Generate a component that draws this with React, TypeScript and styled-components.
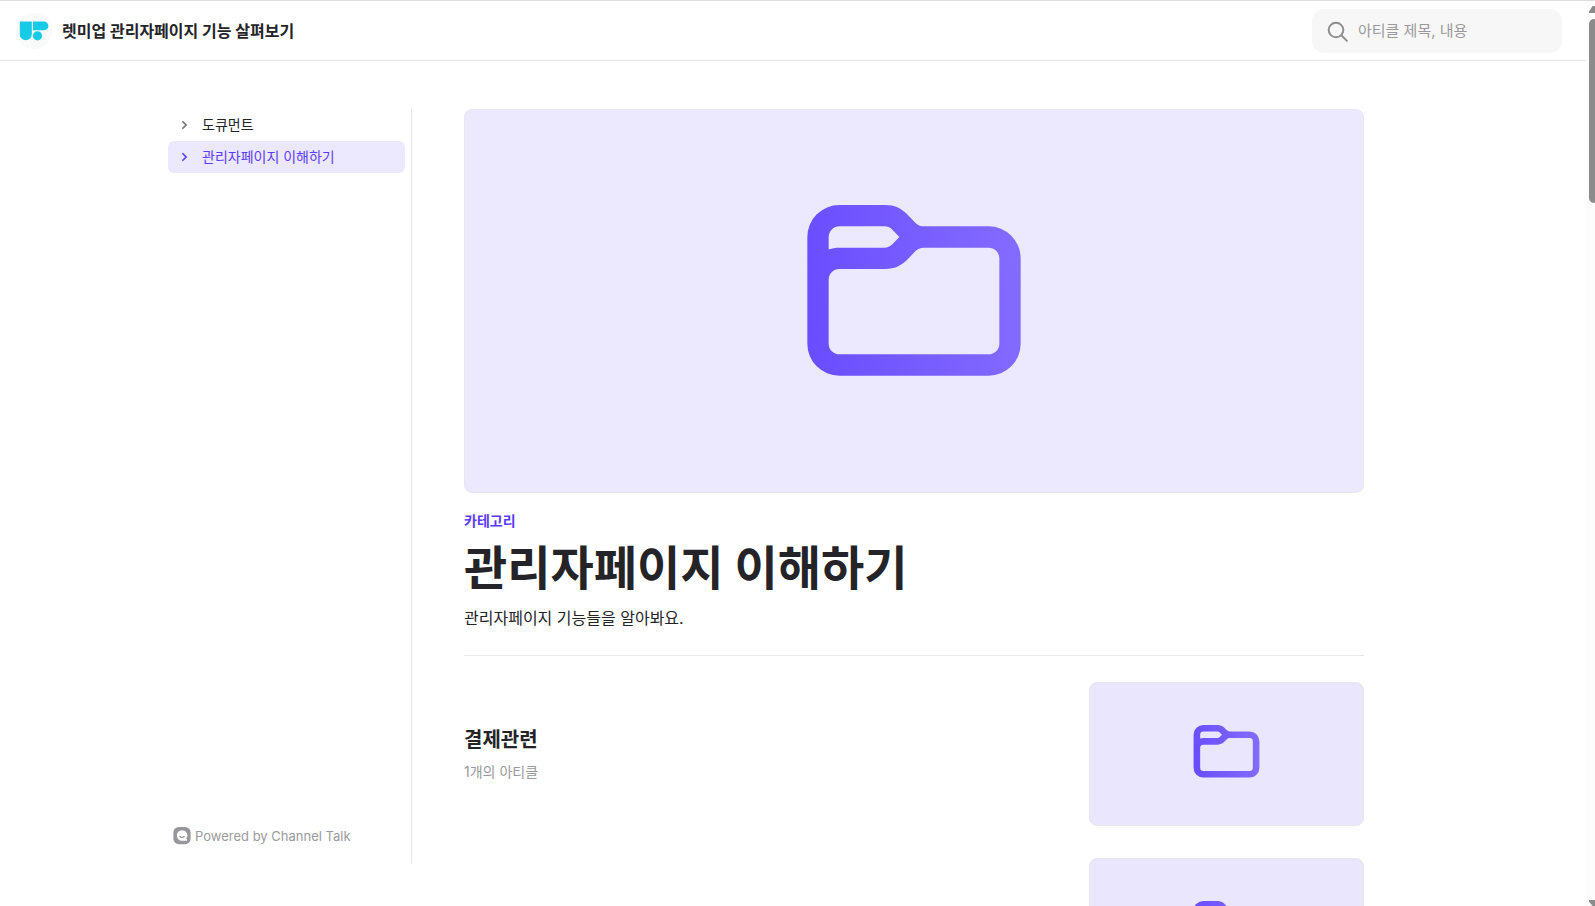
import React, { useId } from "react";
import styled, { createGlobalStyle } from "styled-components";

const color = {
  ink: "#242428",
  muted: "#9a9a9c",
  line: "#e6e6e8",
  accent: "#5b3bfa",
  tint: "#ece8fe",
};

const GlobalStyle = createGlobalStyle`
  *, *::before, *::after { box-sizing: border-box; }
  body {
    margin: 0;
    background: #fff;
    color: ${color.ink};
    font-family: Inter, "Noto Sans CJK KR", sans-serif;
  }
  a { color: inherit; text-decoration: none; }
  h1, h2, p, ul { margin: 0; padding: 0; }
  ul { list-style: none; }
`;

const Shell = styled.div`
  display: grid;
  grid-template-columns: minmax(0, 1fr) 9px;
  height: 100vh;
  overflow: hidden;
  border-top: 1px solid #dedede;
`;

const Page = styled.div`
  display: flex;
  flex-direction: column;
  min-height: 0;
`;

const Header = styled.header`
  flex: none;
  display: flex;
  align-items: center;
  justify-content: space-between;
  height: 60px;
  padding: 0 24px 0 16px;
  border-bottom: 1px solid ${color.line};
`;

const Brand = styled.a`
  display: flex;
  align-items: center;
  gap: 10px;
  font-size: 16px;
  line-height: 24px;
  font-weight: 700;
`;

const SearchBox = styled.label`
  display: flex;
  align-items: center;
  gap: 8px;
  width: 250px;
  height: 44px;
  padding: 0 14px;
  border-radius: 12px;
  background: #f7f7f7;
`;

const SearchInput = styled.input`
  flex: 1;
  min-width: 0;
  padding: 0;
  border: 0;
  outline: 0;
  background: transparent;
  font-family: inherit;
  font-size: 15px;
  line-height: 24px;
  color: ${color.ink};
  &::placeholder { color: ${color.muted}; opacity: 1; }
`;

const Body = styled.div`
  flex: 1;
  min-height: 0;
  display: flex;
  width: 100%;
  max-width: 1262px;
  margin: 0 auto;
  padding-top: 48px;
`;

const Sidebar = styled.aside`
  flex: none;
  display: flex;
  flex-direction: column;
  justify-content: space-between;
  width: 250px;
  margin-bottom: 43px;
  padding: 0 6px 18px;
  border-right: 1px solid ${color.line};
`;

const NavLink = styled.a<{ $active?: boolean }>`
  display: flex;
  align-items: center;
  gap: 10px;
  height: 32px;
  padding: 0 8px;
  border-radius: 6px;
  font-size: 14px;
  line-height: 20px;
  background: ${(p) => (p.$active ? color.tint : "transparent")};
  color: ${(p) => (p.$active ? color.accent : color.ink)};
  svg { color: ${(p) => (p.$active ? color.accent : "#707074")}; }
`;

const Powered = styled.a`
  display: flex;
  align-items: center;
  gap: 4px;
  padding: 0 5px;
  font-size: 13px;
  line-height: 18px;
  color: ${color.muted};
`;

const Main = styled.main`
  flex: 1;
  min-width: 0;
  padding: 0 60px 0 52px;
  overflow: hidden;
`;

const Cover = styled.div`
  display: flex;
  align-items: center;
  justify-content: center;
  height: 384px;
  border: 1px solid #e8e6f2;
  border-radius: 8px;
  background: ${color.tint};
`;

const Intro = styled.section`
  padding: 18px 0 25px;
  border-bottom: 1px solid ${color.line};
`;

const Kind = styled.p`
  font-size: 14px;
  line-height: 20px;
  font-weight: 700;
  color: ${color.accent};
`;

const Title = styled.h1`
  padding: 5px 0 6px;
  font-size: 47px;
  line-height: 64px;
  font-weight: 700;
`;

const Lead = styled.p`
  font-size: 16px;
  line-height: 24px;
`;

const Cards = styled.ul`
  display: flex;
  flex-direction: column;
  gap: 32px;
  padding-top: 26px;
`;

const Card = styled.a`
  display: flex;
  align-items: center;
  justify-content: space-between;
`;

const CardText = styled.div`
  display: flex;
  flex-direction: column;
  gap: 8px;
`;

const CardTitle = styled.h2`
  font-size: 20px;
  line-height: 28px;
  font-weight: 700;
`;

const CardCount = styled.p`
  font-size: 14px;
  line-height: 20px;
  color: ${color.muted};
`;

const Thumb = styled.div`
  display: flex;
  align-items: center;
  justify-content: center;
  width: 275px;
  height: 144px;
  border: 1px solid #e8e8ea;
  border-radius: 8px;
  background: #eae6fd;
`;

const ScrollTrack = styled.div`
  display: flex;
  flex-direction: column;
  justify-content: space-between;
  overflow: hidden;
  padding: 5px 0 0 3px;
  background: #fcfcfc;
`;

const ScrollTop = styled.div`
  display: flex;
  flex-direction: column;
  gap: 6px;
`;

const ScrollThumb = styled.div`
  height: 184px;
  border-radius: 5px 0 0 5px;
  background: #8b8b8b;
`;

const Arrow = styled.svg`
  display: block;
`;

function Folder({ size }: { size: number }) {
  const id = useId();
  return (
    <svg width={size} height={size} viewBox="0 0 24 24" aria-hidden="true">
      <defs>
        <linearGradient id={id} x1="2" y1="12" x2="22" y2="10" gradientUnits="userSpaceOnUse">
          <stop stopColor="#6a4dff" />
          <stop offset="1" stopColor="#846bff" />
        </linearGradient>
      </defs>
      <path
        fill={`url(#${id})`}
        fillRule="evenodd"
        d="M5 3H9.34C10.14 3 10.8 3.3 11.34 3.84L12.12 4.66C12.34 4.89 12.6 5 12.9 5H19A3 3 0 0 1 22 8V16A3 3 0 0 1 19 19H5A3 3 0 0 1 2 16V6A3 3 0 0 1 5 3Z
           M5 5H9.24C9.5 5 9.76 5.1 9.95 5.29L10.63 6L9.95 6.71C9.76 6.9 9.5 7 9.24 7H5C4.65 7 4.31 7.06 4 7.17V6A1 1 0 0 1 5 5Z
           M5 9H9.34C10.14 9 10.8 8.7 11.34 8.16L12.12 7.34C12.34 7.11 12.6 7 12.9 7H19A1 1 0 0 1 20 8V16A1 1 0 0 1 19 17H5A1 1 0 0 1 4 16V10A1 1 0 0 1 5 9Z"
      />
    </svg>
  );
}

const Logo = () => (
  <svg width="36" height="36" viewBox="0 0 36 36" aria-hidden="true">
    <circle cx="18" cy="18" r="18" fill="#fafafa" />
    <g fill="#17cbe6">
      <path d="M3.8 8.6H15.8V21.2a6 6 0 0 1-12 0Z" />
      <path d="M17 8.6H28a4.3 4.3 0 0 1 0 8.6H17Z" />
      <circle cx="21.5" cy="22.8" r="4.6" />
    </g>
  </svg>
);

const Chevron = () => (
  <svg width="16" height="16" viewBox="0 0 16 16" fill="none" aria-hidden="true">
    <path d="M6.4 4.3L10.1 8L6.4 11.7" stroke="currentColor" strokeWidth="1.6" />
  </svg>
);

const SearchIcon = () => (
  <svg width="24" height="24" viewBox="0 0 24 24" fill="none" stroke="#8e8e90" strokeWidth="2" aria-hidden="true">
    <circle cx="10" cy="11" r="7.3" />
    <path d="M15.3 16.3L21.4 22.4" />
  </svg>
);

const ChannelIcon = () => (
  <svg width="18" height="18" viewBox="0 0 18 18" aria-hidden="true">
    <rect x="0.4" y="0" width="17.2" height="17.2" rx="5.4" fill="#97979b" />
    <path d="M9 3.3a5.2 5.2 0 1 0 0 10.4h4.6a.5.5 0 0 0 .4-.8l-.6-1.3A5.2 5.2 0 0 0 9 3.3Z" fill="#fff" />
    <path d="M6.8 9.3C7.8 10.7 10.2 10.7 11.2 9.3" fill="none" stroke="#97979b" strokeWidth="1.2" strokeLinecap="round" />
  </svg>
);

export default function App() {
  return (
    <>
      <GlobalStyle />
      <Shell>
        <Page>
          <Header>
            <Brand href="#">
              <Logo />
              렛미업 관리자페이지 기능 살펴보기
            </Brand>
            <SearchBox>
              <SearchIcon />
              <SearchInput type="text" placeholder="아티클 제목, 내용" aria-label="아티클 제목, 내용" />
            </SearchBox>
          </Header>
          <Body>
            <Sidebar>
              <nav>
                <ul>
                  <li>
                    <NavLink href="#"><Chevron />도큐먼트</NavLink>
                  </li>
                  <li>
                    <NavLink href="#" $active aria-current="page"><Chevron />관리자페이지 이해하기</NavLink>
                  </li>
                </ul>
              </nav>
              <Powered href="#"><ChannelIcon />Powered by Channel Talk</Powered>
            </Sidebar>
            <Main>
              <Cover><Folder size={256} /></Cover>
              <Intro>
                <Kind>카테고리</Kind>
                <Title>관리자페이지 이해하기</Title>
                <Lead>관리자페이지 기능들을 알아봐요.</Lead>
              </Intro>
              <Cards>
                <li>
                  <Card href="#">
                    <CardText>
                      <CardTitle>결제관련</CardTitle>
                      <CardCount>1개의 아티클</CardCount>
                    </CardText>
                    <Thumb><Folder size={79} /></Thumb>
                  </Card>
                </li>
                <li>
                  <Card href="#">
                    <CardText />
                    <Thumb><Folder size={79} /></Thumb>
                  </Card>
                </li>
              </Cards>
            </Main>
          </Body>
        </Page>
        <ScrollTrack aria-hidden="true">
          <ScrollTop>
            <Arrow width="8" height="7" viewBox="0 0 8 7"><path d="M0 7V5.6L3.6 0H8V7Z" fill="#8b8b8b" /></Arrow>
            <ScrollThumb />
          </ScrollTop>
          <Arrow width="8" height="6" viewBox="0 0 8 6"><path d="M0 0H8V6H3.6L0 1.4Z" fill="#8b8b8b" /></Arrow>
        </ScrollTrack>
      </Shell>
    </>
  );
}
